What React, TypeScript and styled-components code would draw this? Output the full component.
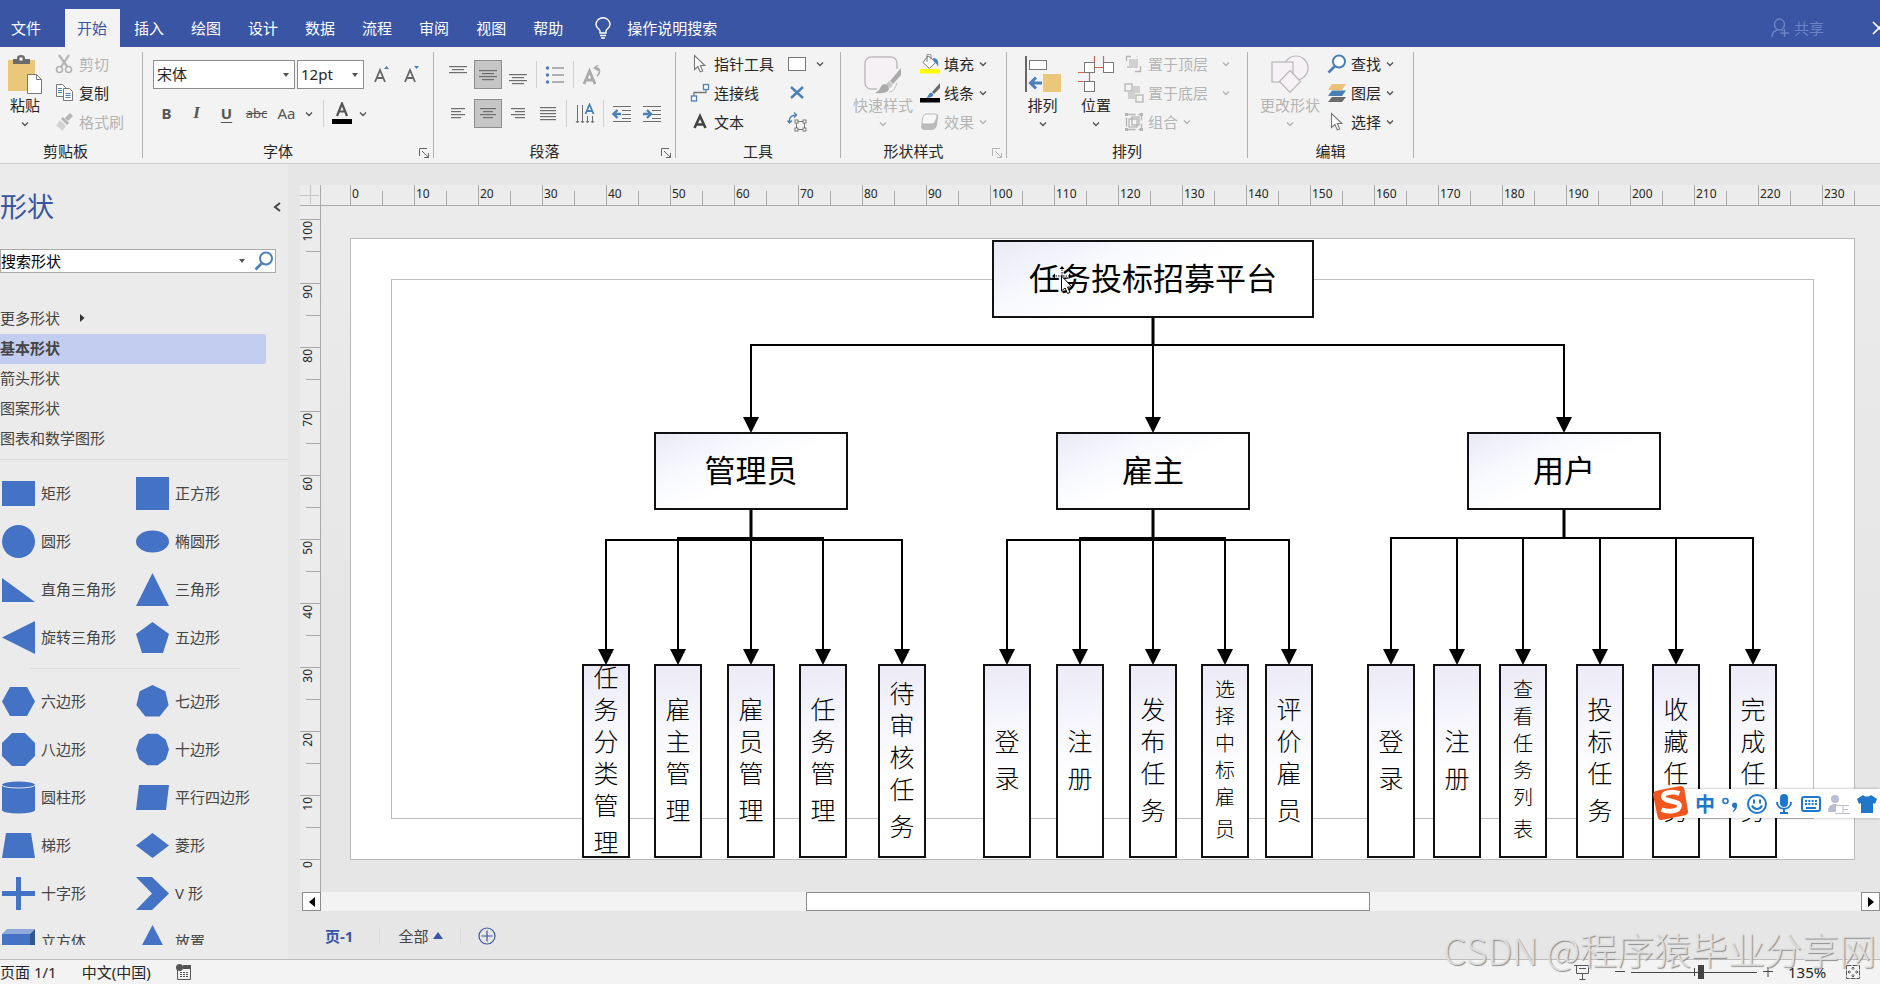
import React from 'react';
import styled, { createGlobalStyle, css } from 'styled-components';

const BLUE = '#3955a3';
const INK = '#262626';
const FADED = '#b4b4b4';
const LINE = '#6e6e6e';
const ACCENT = '#4a7fb8';
const SHAPE = '#4472c4';

const GlobalStyle = createGlobalStyle`
  * { box-sizing: border-box; }
  body { margin: 0; }
  body, button, input, select {
    font-family: "Noto Sans", "Noto Sans CJK SC", sans-serif;
    font-size: 15px;
    line-height: 20px;
    color: ${INK};
  }
  button { background: none; border: 0; padding: 0; margin: 0; }
  svg { display: block; flex: none; }
`;

const Shell = styled.div`
  position: relative;
  display: flex;
  flex-direction: column;
  height: 100vh;
  overflow: hidden;
  background: #e6e6e6;
`;

/* ---------- title bar ---------- */

const TitleBar = styled.header`
  display: flex;
  align-items: flex-end;
  height: 47px;
  flex: none;
  background: ${BLUE};
`;

const Tabs = styled.nav`
  display: flex;
  gap: 2px;
`;

const Tab = styled.button<{ $active?: boolean; $first?: boolean }>`
  height: 38px;
  padding: 0 13px 0 12px;
  white-space: nowrap;
  color: ${p => (p.$active ? BLUE : '#fff')};
  background: ${p => (p.$active ? '#f3f3f3' : 'transparent')};
  ${p => p.$first && css`padding: 0 22px 0 11px;`}
`;

const TellMe = styled.button`
  display: flex;
  align-items: center;
  gap: 16px;
  height: 38px;
  padding-left: 19px;
  color: #fff;
`;

const Share = styled.button`
  display: flex;
  align-items: center;
  gap: 4px;
  height: 38px;
  margin-left: auto;
  color: #6d83c6;
`;

const CloseButton = styled.button`
  width: 56px;
  height: 38px;
  overflow: hidden;
  display: flex;
  align-items: center;
  padding-left: 48px;
`;

/* ---------- ribbon ---------- */

const Ribbon = styled.div`
  display: flex;
  flex: none;
  height: 117px;
  background: #f3f3f3;
  border-bottom: 1px solid #cfcfcf;
`;

const GroupBox = styled.section<{ $width: number }>`
  width: ${p => p.$width}px;
  flex: none;
  padding-top: 2px;
`;

const GroupBody = styled.div<{ $indent: number; $gap?: number }>`
  display: flex;
  gap: ${p => p.$gap ?? 0}px;
  height: 87px;
  padding-left: ${p => p.$indent}px;
`;

const GroupFooter = styled.div<{ $inset?: number }>`
  display: flex;
  align-items: center;
  height: 26px;
  padding: 3px ${p => p.$inset ?? 0}px 0 0;
  span { flex: 1; text-align: center; }
`;

const Launcher = styled.button`
  display: flex;
  justify-content: center;
  width: 20px;
  padding: 4px 0 0 1px;
`;

const GroupDivider = styled.div`
  width: 1px;
  height: 106px;
  margin: 5px 0;
  flex: none;
  background: #b1b1b1;
`;

const Stack = styled.div`
  display: flex;
  flex-direction: column;
`;

const SmallBtn = styled.button<{ $far?: boolean }>`
  display: flex;
  align-items: center;
  gap: 4px;
  height: 29px;
  white-space: nowrap;
  &:disabled { color: ${FADED}; }
  svg:last-child { margin-left: ${p => (p.$far ? 9 : 0)}px; }
`;

const BigBtn = styled.button<{ $width: number }>`
  display: flex;
  flex-direction: column;
  align-items: center;
  width: ${p => p.$width}px;
  height: 87px;
  padding-top: 6px;
  white-space: nowrap;
  &:disabled { color: ${FADED}; }
`;

const BigIcon = styled.span`
  height: 40px;
`;

const BigChevron = styled.span`
  padding-top: 5px;
`;

const TwoRows = styled.div`
  display: flex;
  flex-direction: column;
  gap: 10px;
  padding-top: 11px;
`;

const ToolRow = styled.div`
  display: flex;
  align-items: center;
  height: 29px;
`;

const ToolBtn = styled.button<{ $pressed?: boolean; $slim?: boolean }>`
  display: flex;
  align-items: center;
  justify-content: center;
  width: ${p => (p.$slim ? 12 : 30)}px;
  height: 29px;
  ${p => p.$pressed && css`
    width: 28px;
    margin: 0 1px;
    background: #c6c6c6;
    border: 1px solid #8d8d8d;
  `}
`;

const Glyph = styled.span<{ $kind?: 'bold' | 'italic' | 'under' | 'strike' | 'case' }>`
  color: #555;
  font-weight: 700;
  padding: 0 3px 2px 0;
  ${p => p.$kind === 'italic' && css`font-family: "Liberation Serif", serif; font-style: italic; font-size: 17px;`}
  ${p => p.$kind === 'under' && css`text-decoration: underline; text-underline-offset: 3px;`}
  ${p => p.$kind === 'strike' && css`font-weight: 400; font-size: 13px; text-decoration: line-through;`}
  ${p => p.$kind === 'case' && css`font-weight: 400;`}
`;

const ToolSep = styled.div<{ $wide?: boolean }>`
  width: 1px;
  height: 27px;
  margin: ${p => (p.$wide ? '0 3px 0 8px' : '0 3px')};
  background: #d0d0d0;
`;

const SelectBox = styled.label<{ $width: number }>`
  position: relative;
  width: ${p => p.$width}px;
  height: 29px;
  margin-right: 2px;
  select {
    appearance: none;
    width: 100%;
    height: 100%;
    padding: 0 16px 2px 3px;
    background: #fff;
    border: 1px solid #8d8d8d;
    border-radius: 0;
  }
  svg { position: absolute; right: 5px; top: 13px; pointer-events: none; }
`;

/* ---------- shapes panel ---------- */

const Main = styled.main`
  display: flex;
  flex: 1;
  min-height: 0;
`;

const Panel = styled.aside`
  display: flex;
  flex-direction: column;
  width: 288px;
  flex: none;
  padding-bottom: 14px;
  background: #ebebeb;
`;

const PanelHead = styled.div`
  display: flex;
  justify-content: space-between;
  align-items: center;
  height: 85px;
  padding-right: 7px;
  flex: none;
  h2 { margin: 0; font-size: 27px; line-height: 36px; font-weight: 400; color: ${BLUE}; }
`;

const SearchBox = styled.form`
  display: flex;
  align-items: center;
  width: 276px;
  height: 24px;
  flex: none;
  background: #fff;
  border: 1px solid #a9a9a9;
  input { flex: 1; min-width: 0; height: 20px; padding: 0; border: 0; background: none; color: #000; }
  button { padding: 0 1px 0 8px; }
`;

const StencilList = styled.nav`
  padding: 31px 22px 5px 0;
  flex: none;
`;

const StencilItem = styled.a<{ $active?: boolean }>`
  display: flex;
  align-items: center;
  gap: 20px;
  height: 30px;
  padding-bottom: 2px;
  color: #444;
  text-decoration: none;
  font-weight: ${p => (p.$active ? 700 : 400)};
  background: ${p => (p.$active ? '#c2cdef' : 'transparent')};
  border-radius: 0 2px 2px 0;
`;

const Stencils = styled.div`
  flex: 1;
  min-height: 0;
  overflow: hidden;
  padding-top: 9px;
  border-top: 1px solid #dadada;
`;

const ShapeGrid = styled.div`
  display: grid;
  grid-template-columns: 134px 134px;
  grid-auto-rows: 48px;
`;

const ShapeBtn = styled.button`
  display: flex;
  align-items: center;
  gap: 6px;
  padding-left: 2px;
  color: #444;
  white-space: nowrap;
`;

const StencilRule = styled.div`
  height: 1px;
  margin: 7px 48px 8px 30px;
  background: #dcdcdc;
`;

/* ---------- workspace ---------- */

const Workspace = styled.div`
  display: flex;
  flex-direction: column;
  flex: 1;
  min-width: 0;
  padding: 21px 0 0 12px;
`;

const RulerRow = styled.div`
  display: flex;
  height: 21px;
  flex: none;
  background: #ececec;
  border-bottom: 1px solid #a9a9a9;
`;

const Corner = styled.div`
  width: 21px;
  flex: none;
  border-right: 1px solid #a9a9a9;
`;

const HRuler = styled.div`
  display: flex;
  flex: 1;
  min-width: 0;
  overflow: hidden;
  padding-left: 29px;
`;

const HMark = styled.div`
  position: relative;
  width: 64px;
  flex: none;
  padding-left: 1px;
  border-left: 1px solid #a9a9a9;
  font-size: 12px;
  line-height: 17px;
  &::after {
    content: '';
    position: absolute;
    left: 31px;
    bottom: 0;
    width: 1px;
    height: 14px;
    background: #a9a9a9;
  }
`;

const CanvasRow = styled.div`
  display: flex;
  flex: 1;
  min-height: 0;
`;

const VRuler = styled.div`
  width: 21px;
  flex: none;
  overflow: hidden;
  padding-top: 13px;
  background: #ececec;
  border-right: 1px solid #a9a9a9;
`;

const VMark = styled.div`
  position: relative;
  height: 64px;
  border-top: 1px solid #a9a9a9;
  font-size: 12px;
  line-height: 16px;
  &::after {
    content: '';
    position: absolute;
    right: 0;
    top: 31px;
    width: 14px;
    height: 1px;
    background: #a9a9a9;
  }
  &:last-child::after { display: none; }
  span {
    display: block;
    margin-top: 1px;
    writing-mode: vertical-rl;
    transform: rotate(180deg);
    width: 16px;
  }
`;

const Canvas = styled.div`
  flex: 1;
  min-width: 0;
  overflow: hidden;
  padding: 32px 0 0 29px;
  background: linear-gradient(#ebebeb, #e6e6e6 60%);
`;

const Sheet = styled.div`
  position: relative;
  width: 1505px;
  height: 622px;
  background: #fff;
  outline: 1px solid #b9b9b9;
  outline-offset: -1px;
`;

const Margins = styled.div`
  position: absolute;
  inset: 41px;
  border: 1px solid #bdbdbd;
`;

const Wires = styled.svg`
  position: absolute;
  inset: 0;
`;

const Node = styled.div<{ $leaf?: boolean }>`
  position: absolute;
  display: flex;
  flex-direction: column;
  align-items: center;
  justify-content: center;
  padding-bottom: ${p => (p.$leaf ? 6 : 5)}px;
  border: 2px solid #111;
  color: #000;
  font-family: "Noto Sans CJK SC", sans-serif;
  font-size: 31px;
  line-height: 40px;
  white-space: nowrap;
  background: ${p => (p.$leaf
    ? 'linear-gradient(172deg, #ebeaf6, #f6f6fc 30%, #fff 60%)'
    : 'linear-gradient(155deg, #e9e9f5, #f8f9fd 30%, #fff 55%)')};
`;

const Column = styled.span<{ $small?: boolean }>`
  white-space: normal;
  word-break: break-all;
  font-weight: 300;
  width: ${p => (p.$small ? 20 : 25)}px;
  font-size: ${p => (p.$small ? 20 : 25)}px;
  line-height: ${p => (p.$small ? 27 : 32)}px;
  span { display: block; padding-top: 5px; }
`;

const Pointer = styled.svg`
  position: absolute;
  left: 702px;
  top: 28px;
`;

const ScrollRow = styled.div`
  display: flex;
  height: 20px;
  flex: none;
  padding-left: 2px;
`;

const ScrollBtn = styled.button`
  display: flex;
  align-items: center;
  justify-content: center;
  width: 19px;
  height: 19px;
  background: #fff;
  border: 1px solid #8d8d8d;
`;

const ScrollTrack = styled.div`
  display: grid;
  grid-template-columns: 485fr 564fr 491fr;
  flex: 1;
  height: 19px;
  background: #f3f3f3;
`;

const ScrollThumb = styled.div`
  grid-column: 2;
  background: #fff;
  border: 1px solid #8d8d8d;
`;

const PageTabs = styled.div`
  display: flex;
  align-items: center;
  height: 47px;
  flex: none;
  padding-left: 25px;
`;

const PageTab = styled.button<{ $active?: boolean }>`
  display: flex;
  align-items: center;
  gap: 5px;
  color: ${p => (p.$active ? BLUE : '#444')};
  font-weight: ${p => (p.$active ? 700 : 400)};
`;

const PageSep = styled.div`
  width: 1px;
  height: 17px;
  margin: 0 18px 0 26px;
  background: #dcdcdc;
  & ~ & { margin: 0 17px; }
`;

/* ---------- status bar ---------- */

const StatusBar = styled.footer`
  display: flex;
  align-items: center;
  height: 25px;
  flex: none;
  padding-right: 20px;
  background: #f3f3f3;
  border-top: 1px solid #bcbcbc;
`;

const StatusLeft = styled.div`
  display: flex;
  align-items: center;
  gap: 25px;
  flex: 1;
`;

const ZoomGroup = styled.div`
  display: flex;
  align-items: center;
  gap: 6px;
  margin: 0 8px 0 24px;
`;

const ZoomSlider = styled.input`
  appearance: none;
  width: 126px;
  height: 16px;
  margin: 0;
  background: linear-gradient(#444, #444) center / 100% 1px no-repeat,
    linear-gradient(#444, #444) center / 1px 8px no-repeat;
  &::-webkit-slider-thumb {
    appearance: none;
    width: 6px;
    height: 14px;
    background: #444;
  }
`;

const ZoomText = styled.button`
  width: 65px;
  padding-left: 7px;
  text-align: left;
`;

/* ---------- floating pieces ---------- */

const ImeBar = styled.div`
  position: absolute;
  right: 0;
  bottom: 166px;
  display: flex;
  align-items: center;
  gap: 5px;
  height: 29px;
  padding: 0 2px 0 40px;
  background: #fff;
  box-shadow: 0 0 3px rgba(0, 0, 0, 0.35);
  border-radius: 14px 0 0 14px;
`;

const ImeLogo = styled.svg`
  position: absolute;
  left: -1px;
  top: -4px;
`;

const ImeMode = styled.button`
  width: 22px;
  color: #1f77c9;
  font-family: "Noto Sans CJK SC", sans-serif;
  font-weight: 700;
  font-size: 20px;
`;

const Watermark = styled.div`
  position: absolute;
  right: 4px;
  bottom: 12px;
  font-family: "Noto Sans CJK SC", sans-serif;
  font-weight: 300;
  font-size: 37px;
  line-height: 46px;
  color: rgba(228, 228, 228, 0.9);
  text-shadow: 1px 1px 1px #8c8c8c;
  pointer-events: none;
  white-space: nowrap;
`;

/* ---------- small drawings ---------- */

const Chevron = ({ faded }: { faded?: boolean }) => (
  <svg width="10" height="8" viewBox="0 0 10 8" fill="none" stroke={faded ? FADED : '#555'} strokeWidth="1.4">
    <path d="M2 2.5 5 5.5 8 2.5" />
  </svg>
);

const Caret = () => (
  <svg width="8" height="5" viewBox="0 0 8 5"><path d="M1 0h6L4 4z" fill="#555" /></svg>
);

const Lines = ({ rows }: { rows: [number, number, number][] }) => (
  <svg width="20" height="20" viewBox="0 0 20 20" fill={LINE}>
    {rows.map(([x, y, len]) => <rect key={y} x={x} y={y} width={len} height="1.2" />)}
  </svg>
);

const Arrow = () => (
  <svg width="20" height="20" viewBox="0 0 20 20" fill="#fff" stroke="#777" strokeWidth="1.1">
    <path d="M4.5 1.5v14l3.4-3 2.4 5.4 2.4-1-2.4-5.4h4.6z" />
  </svg>
);

const Magnifier = () => (
  <svg width="20" height="20" viewBox="0 0 20 20" fill="none" stroke={ACCENT} strokeWidth="2">
    <circle cx="12" cy="7.5" r="6" fill="#fff" /><path d="M8 12 1.5 18.5" strokeWidth="2.6" />
  </svg>
);

const PasteIcon = () => (
  <svg width="34" height="40" viewBox="0 0 34 40">
    <path d="M0 5h27v31H0z" fill="#ebc77c" />
    <path d="M5 4h4V3a4 3 0 0 1 8 0v1h5v5H5z" fill="#6b6b6b" /><rect x="11.5" y="2.5" width="3" height="3" fill="#fff" />
    <path d="M19.5 19.5h9l5 5V38.5h-14z" fill="#fff" stroke="#777" /><path d="M28.5 19.5v5h5" fill="none" stroke="#777" />
  </svg>
);

const CutIcon = () => (
  <svg width="20" height="20" viewBox="0 0 20 20" fill="none" stroke={FADED} strokeWidth="1.6">
    <path d="M4 1l8.5 12M14 1 6 13" strokeWidth="2.2" /><circle cx="4.5" cy="15.5" r="3" /><circle cx="13.5" cy="15.5" r="3" />
  </svg>
);

const CopyIcon = () => (
  <svg width="20" height="20" viewBox="0 0 20 20" fill="#fff" stroke="#777">
    <path d="M1.5 1.5h6l3 3v9h-9z" /><path d="M8.5 5.5h6l3 3v9h-9z" />
    <path d="M10.5 10.5h5M10.5 12.5h5M10.5 14.5h5M3 5.5h4M3 7.5h4M3 9.5h4" stroke={ACCENT} />
  </svg>
);

const BrushIcon = () => (
  <svg width="20" height="20" viewBox="0 0 20 20" fill={FADED}>
    <path d="M15 1l3 3-5 5-3-3z" /><path d="M8 5l6 6-2 2-6-6z" /><path d="M5 8l6 6-4 5c-1-2-3-4-6-5z" fill="#d2d2d2" />
  </svg>
);

const GrowFont = ({ down }: { down?: boolean }) => (
  <svg width="20" height="20" viewBox="0 0 20 20" fill="none" stroke="#666" strokeWidth="1.8">
    <path d="M4 17 9 5l5 12M5.5 13h7" />
    <path d={down ? 'M13 1h5l-2.5 3z' : 'M13 4h5L15.5 1z'} fill={ACCENT} stroke="none" />
  </svg>
);

const FontColor = () => (
  <svg width="20" height="24" viewBox="0 0 20 24">
    <path d="M5 14 10 1.5 15 14M6.5 9.5h7" fill="none" stroke="#555" strokeWidth="2.2" /><rect y="17" width="20" height="5" />
  </svg>
);

const Bullets = () => (
  <svg width="20" height="20" viewBox="0 0 20 20">
    <path d="M7 3h12M7 10h12M7 17h12" stroke={LINE} />
    <g fill={ACCENT}><circle cx="2.5" cy="3" r="1.7" /><circle cx="2.5" cy="10" r="1.7" /><circle cx="2.5" cy="17" r="1.7" /></g>
  </svg>
);

const RotateText = () => (
  <svg width="20" height="20" viewBox="0 0 20 20" fill="none" stroke="#aaa">
    <path d="M2 19 7.5 6 13 19M4 15h7" strokeWidth="2.8" /><path d="M13 3c5-1 6 5 2 8M16 0l-3.5 3 4 2.5" strokeWidth="1.6" />
  </svg>
);

const TextDir = () => (
  <svg width="20" height="22" viewBox="0 0 20 22" fill="none" stroke={LINE}>
    <path d="M2.5 2v17M7.5 2v17M12.5 13v6M17.5 13v6M1 18l1.5 2L4 18M6 18l1.5 2L9 18M11 18l1.5 2 1.5-2M16 18l1.5 2 1.5-2" />
    <path d="M10.5 11 14.5 1.5 18.5 11M12 8h5" stroke={ACCENT} strokeWidth="1.8" />
  </svg>
);

const Indent = ({ right }: { right?: boolean }) => (
  <svg width="20" height="20" viewBox="0 0 20 20" fill="none" stroke={LINE}>
    <path d="M1 2.5h18M10 6.5h9M10 10.5h9M10 14.5h9M1 17.5h18" />
    <path d={right ? 'M1 10h7M5 6l4 4-4 4' : 'M9 10H2M5.5 6l-4 4 4 4'} stroke={ACCENT} strokeWidth="2.4" />
  </svg>
);

const ConnectorIcon = () => (
  <svg width="20" height="20" viewBox="0 0 20 20" fill="#fff" stroke={ACCENT} strokeWidth="1.3">
    <path d="M4 14V9.5h12V6" fill="none" stroke="#777" /><rect x="1.5" y="13" width="5" height="5" /><rect x="13.5" y="1.5" width="5" height="5" />
  </svg>
);

const LetterA = () => (
  <svg width="20" height="20" viewBox="0 0 20 20" fill="none" stroke="#444" strokeWidth="2.6">
    <path d="M4.5 16 10 4l5.5 12M6.5 12.5h7" />
  </svg>
);

const BoxIcon = () => (
  <svg width="20" height="20" viewBox="0 0 20 20"><rect x="1.5" y="3.5" width="17" height="13" fill="#fff" stroke="#777" /></svg>
);

const CrossIcon = () => (
  <svg width="20" height="20" viewBox="0 0 20 20" stroke={ACCENT} strokeWidth="2.4"><path d="M4 4l12 11M16 4 4 15" /></svg>
);

const AnchorIcon = () => (
  <svg width="20" height="20" viewBox="0 0 20 20" fill="none" stroke="#777">
    <rect x="9.5" y="9.5" width="8" height="8" />
    <g fill="#fff"><rect x="8" y="8" width="3" height="3" /><rect x="16" y="8" width="3" height="3" /><rect x="8" y="16" width="3" height="3" /><rect x="16" y="16" width="3" height="3" /></g>
    <path d="M2.5 11V8c0-3 3-5 7-5M7 0.5 9.5 3 7 5.5M0.5 8.5l2 2.5 2.5-2.5" stroke={ACCENT} strokeWidth="1.4" />
  </svg>
);

const QuickStyleIcon = () => (
  <svg width="38" height="40" viewBox="0 0 38 40" fill="none" stroke="#c0bcc0">
    <path d="M13 34H7a6 6 0 0 1-6-6V8a6 6 0 0 1 6-6h20a6 6 0 0 1 6 6v6" fill="#f5f1f5" strokeWidth="1.5" />
    <path d="M37 13v7l-8 9-3-3z" fill="#aaa" stroke="none" /><path d="M25 26l4 4-3 3-4-4z" fill="#c6c6c6" stroke="none" />
    <path d="M11 38c4-2 5-5 7-8 3-2 7 0 7 4-1 4-8 5-14 4z" fill="#aaa" stroke="none" /><path d="M25 37c5 0 6-4 8-9" />
  </svg>
);

const FillIcon = () => (
  <svg width="20" height="20" viewBox="0 0 20 20">
    <path d="M8 2 3 8.5l6.5 6L16 8z" fill="#fff" stroke="#777" /><path d="M7 8V1.5a2 1.5 0 0 1 4 0V5" fill="none" stroke="#777" />
    <path d="M13 4c5 0 6 4 5 9-1-3-2-4-4-5z" fill={ACCENT} /><path d="M0 15h20v4.5H0z" fill="#ff0" />
  </svg>
);

const LineIcon = () => (
  <svg width="20" height="20" viewBox="0 0 20 20">
    <path d="M20 0v5l-6 6-2-2z" fill="#6b6b6b" /><path d="M6 15c3-1 2-6 6-5 3 2 0 5-6 5z" fill={ACCENT} /><path d="M0 15h20v4.5H0z" />
  </svg>
);

const EffectIcon = () => (
  <svg width="20" height="20" viewBox="0 0 20 20">
    <path d="M5 2h11q3 0 2 4l-1 7q-1 5-6 5H5q-4 0-4-4z" fill="#bbb" /><path d="M6 2h9q3 0 2 3l-2 5q-1 2-4 2H4q-3 0-2-3l1-4q1-3 3-3z" fill="#f7f7f7" stroke="#bbb" />
  </svg>
);

const AlignIcon = () => (
  <svg width="36" height="40" viewBox="0 0 36 40">
    <path d="M1 1v36" stroke="#666" strokeWidth="2" /><rect x="4.5" y="5.5" width="17" height="9" fill="#fff" stroke="#777" />
    <rect x="18" y="19" width="18" height="18" fill="#ebc77c" /><path d="M17 28H6M11 22.5 5.5 28l5.5 5.5" fill="none" stroke={ACCENT} strokeWidth="3" />
  </svg>
);

const PositionIcon = () => (
  <svg width="36" height="40" viewBox="0 0 36 40" fill="#fff">
    <path d="M16.5 1v7M25.5 1v7M16 12.5h9M0 17.5h6M0 26.5h6M11.5 17v9" stroke="#d0674c" strokeWidth="1.2" />
    <g stroke="#777"><rect x="6.5" y="7.5" width="10" height="10" /><rect x="25.5" y="7.5" width="10" height="10" /><rect x="6.5" y="26.5" width="10" height="10" /></g>
  </svg>
);

const FrontIcon = () => (
  <svg width="20" height="20" viewBox="0 0 20 20" fill="none" stroke={FADED} strokeWidth="1.3">
    <rect x="5" y="5" width="9" height="9" fill="#d0d0d0" stroke="none" /><path d="M2.5 7V2.500H7M13 2.500V3M11 17.500h5.500V12M4 12v2" />
  </svg>
);

const BackIcon = () => (
  <svg width="20" height="20" viewBox="0 0 20 20" fill="#f3f3f3" stroke={FADED} strokeWidth="1.3">
    <rect x="9" y="3" width="7" height="7" fill="#d0d0d0" stroke="none" /><rect x="4" y="9" width="7" height="7" fill="#d0d0d0" stroke="none" />
    <rect x="1" y="1" width="7" height="7" /><rect x="12" y="12" width="7" height="7" />
  </svg>
);

const GroupIcon = () => (
  <svg width="20" height="20" viewBox="0 0 20 20" fill="none" stroke={FADED} strokeWidth="1.3">
    <rect x="2.5" y="2.5" width="15" height="15" strokeDasharray="9 3" /><rect x="5" y="7" width="8" height="8" /><rect x="8" y="5" width="7" height="8" />
    <g fill={FADED} stroke="none"><rect x="1" y="1" width="3" height="3" /><rect x="16" y="1" width="3" height="3" /><rect x="1" y="16" width="3" height="3" /><rect x="16" y="16" width="3" height="3" /></g>
  </svg>
);

const ChangeShapeIcon = () => (
  <svg width="38" height="40" viewBox="0 0 38 40" fill="#f5f1f5" stroke="#bbb6bb" strokeWidth="1.2">
    <circle cx="25" cy="13" r="12" /><rect x="1" y="7" width="21" height="20" /><path d="M19 15.5 29.5 26.5 19 37.5 8.5 26.5z" />
  </svg>
);

const LayersIcon = () => (
  <svg width="20" height="20" viewBox="0 0 20 20">
    <path d="M5 1h14l-4 6H1z" fill="#ebc077" /><path d="M5 7.5h14l-4 5.5H1z" fill={ACCENT} /><path d="M5 14h14l-4 5H1z" fill="#6b6b6b" />
  </svg>
);

const DialogMark = ({ faded }: { faded?: boolean }) => (
  <svg width="10" height="10" viewBox="0 0 10 10" fill="none" stroke={faded ? FADED : '#666'}>
    <path d="M.5 8V.5H8M3 3l6 6M9.5 5v4.5H5" />
  </svg>
);

/* ---------- stencil shapes ---------- */

const polygon = (n: number, start = -90) =>
  Array.from({ length: n }, (_, i) => {
    const a = ((start + (360 / n) * i) * Math.PI) / 180;
    return `${(16.5 + 16.5 * Math.cos(a)).toFixed(1)},${(16.5 + 16.5 * Math.sin(a)).toFixed(1)}`;
  }).join(' ');

const poly = (points: string) => <polygon points={points} />;

const basicShapes: [string, React.ReactNode][] = [
  ['矩形', <rect x="0" y="4" width="33" height="25" />],
  ['正方形', <rect x="0" y="0" width="33" height="33" />],
  ['圆形', <circle cx="16.5" cy="16.5" r="16.5" />],
  ['椭圆形', <ellipse cx="16.5" cy="16.5" rx="16.5" ry="11" />],
  ['直角三角形', poly('0,5 0,29 33,29')],
  ['三角形', poly('16.5,0 33,33 0,33')],
  ['旋转三角形', poly('33,0 33,33 0,16.5')],
  ['五边形', poly('16.5,1 33,13 27,32 6,32 0,13')],
];

const moreShapes: [string, React.ReactNode][] = [
  ['六边形', poly('8,2 25,2 33,16.5 25,31 8,31 0,16.5')],
  ['七边形', poly(polygon(7))],
  ['八边形', poly('10,0 23,0 33,10 33,23 23,33 10,33 0,23 0,10')],
  ['十边形', poly(polygon(10, -72))],
  ['圆柱形', <><path d="M0 4a16.5 3.5 0 0 1 33 0v25a16.5 3.5 0 0 1-33 0z" /><path d="M0 4a16.5 3 0 0 0 33 0" fill="none" stroke="#dfe6f5" /></>],
  ['平行四边形', poly('3,4 33,4 30,29 0,29')],
  ['梯形', poly('4,4 29,4 33,29 0,29')],
  ['菱形', poly('16.5,4 33,16.5 16.5,29 0,16.5')],
  ['十字形', poly('14,0 19,0 19,14 33,14 33,19 19,19 19,33 14,33 14,19 0,19 0,14 14,14')],
  ['V 形', poly('0,0 16,0 33,16.5 16,33 0,33 16,16.5')],
  ['立方体', <><path d="M0 9h28v24H0z" /><path d="M0 9 5 4h28l-5 5z" fill="#8fa9da" /><path d="M28 9l5-5v29h-5z" fill="#34568f" /></>],
  ['放置', poly('16.5,0 28,22 28,33 5,33 5,22')],
];

const ShapeList = ({ items }: { items: [string, React.ReactNode][] }) => (
  <ShapeGrid>
    {items.map(([name, drawing]) => (
      <ShapeBtn key={name} type="button">
        <svg width="33" height="33" viewBox="0 0 33 33" fill={SHAPE}>{drawing}</svg>
        {name}
      </ShapeBtn>
    ))}
  </ShapeGrid>
);

/* ---------- diagram data, in sheet coordinates ---------- */

type Leaf = { x: number; text: string; small?: boolean; bus?: number };
type Branch = { x: number; text: string; leaves: Leaf[] };

const branches: Branch[] = [
  { x: 304, text: '管理员', leaves: [
    { x: 232, text: '任务分类管理', bus: 302 },
    { x: 304, text: '雇主管理' },
    { x: 377, text: '雇员管理' },
    { x: 449, text: '任务管理' },
    { x: 528, text: '待审核任务', bus: 302 },
  ] },
  { x: 706, text: '雇主', leaves: [
    { x: 633, text: '登录', bus: 302 },
    { x: 706, text: '注册' },
    { x: 779, text: '发布任务' },
    { x: 851, text: '选择中标雇员', small: true },
    { x: 915, text: '评价雇员', bus: 302 },
  ] },
  { x: 1117, text: '用户', leaves: [
    { x: 1017, text: '登录' },
    { x: 1083, text: '注册' },
    { x: 1149, text: '查看任务列表', small: true },
    { x: 1226, text: '投标任务' },
    { x: 1302, text: '收藏任务' },
    { x: 1379, text: '完成任务' },
  ] },
];

const ROOT_X = 803;
const BRANCH_W = 194;
const LEAF_W = 48;

const Diagram = () => (
  <>
    <Wires width="1505" height="622" viewBox="0 0 1505 622" fill="none" stroke="#000" strokeWidth="2">
      {branches.map(b => {
        const bx = b.x + BRANCH_W / 2;
        return (
          <g key={b.text}>
            <path d={`M${ROOT_X} 80V107H${bx}V182`} />
            <path d={`M${bx - 8} 179h16l-8 16z`} fill="#000" stroke="none" />
            <path d={`M${bx} 271V300`} strokeWidth="3" />
            {b.leaves.map(l => {
              const lx = l.x + LEAF_W / 2;
              return (
                <g key={l.text}>
                  <path d={`M${bx} 280V${l.bus ?? 300}H${lx}V414`} />
                  <path d={`M${lx - 8} 411h16l-8 16z`} fill="#000" stroke="none" />
                </g>
              );
            })}
          </g>
        );
      })}
      <path d={`M${ROOT_X} 79V107`} strokeWidth="3" />
    </Wires>
    <Node style={{ left: 642, top: 2, width: 322, height: 78 }}>任务投标招募平台</Node>
    {branches.map(b => (
      <React.Fragment key={b.text}>
        <Node style={{ left: b.x, top: 194, width: BRANCH_W, height: 78 }}>{b.text}</Node>
        {b.leaves.map(l => (
          <Node key={l.text} $leaf style={{ left: l.x, top: 426, width: LEAF_W, height: 194 }}>
            <Column $small={l.small}>
              {l.text.slice(0, -1)}<span>{l.text.slice(-1)}</span>
            </Column>
          </Node>
        ))}
      </React.Fragment>
    ))}
    <Pointer width="20" height="30" viewBox="0 0 20 30">
      <g fill="none" stroke="#fff" strokeWidth="3"><path d="M10 2v16M2 10h16" /></g>
      <path d="M10 1v18M1 10h18" stroke="#000" strokeDasharray="1.5 1" />
      <path d="M10 0 7.5 3h5zM0 10l3-2.5v5zM20 10l-3-2.5v5z" />
      <path d="M9.5 10v15l3.5-3 2.5 5.5 2.500-1-2.500-5.500h4.500z" fill="#fff" stroke="#000" />
    </Pointer>
  </>
);

/* ---------- ribbon composition ---------- */

type GroupProps = {
  width: number; indent: number; gap?: number; label: string; inset?: number;
  launcher?: boolean; fadedLauncher?: boolean; children: React.ReactNode;
};

const Group = ({ width, indent, gap, label, inset, launcher, fadedLauncher, children }: GroupProps) => (
  <>
    <GroupBox $width={width} aria-label={label}>
      <GroupBody $indent={indent} $gap={gap}>{children}</GroupBody>
      <GroupFooter $inset={inset}>
        <span>{label}</span>
        {launcher && <Launcher type="button" aria-label={`${label}设置`}><DialogMark faded={fadedLauncher} /></Launcher>}
      </GroupFooter>
    </GroupBox>
    <GroupDivider />
  </>
);

type BtnProps = { icon: React.ReactNode; label: string; disabled?: boolean; menu?: boolean; far?: boolean };

const Small = ({ icon, label, disabled, menu, far }: BtnProps) => (
  <SmallBtn type="button" disabled={disabled} $far={far}>
    {icon}<span>{label}</span>{menu && <Chevron faded={disabled} />}
  </SmallBtn>
);

const Big = ({ icon, label, disabled, width }: BtnProps & { width: number }) => (
  <BigBtn type="button" disabled={disabled} $width={width}>
    <BigIcon>{icon}</BigIcon>
    <span>{label}</span>
    <BigChevron><Chevron faded={disabled} /></BigChevron>
  </BigBtn>
);

const tabs = ['插入', '绘图', '设计', '数据', '流程', '审阅', '视图', '帮助'];
const hMarks = Array.from({ length: 24 }, (_, i) => i * 10);
const vMarks = Array.from({ length: 11 }, (_, i) => 100 - i * 10);

export default function App() {
  return (
    <Shell>
      <GlobalStyle />
      <TitleBar>
        <Tabs>
          <Tab type="button" $first>文件</Tab>
          <Tab type="button" $active>开始</Tab>
          {tabs.map(t => <Tab type="button" key={t}>{t}</Tab>)}
        </Tabs>
        <TellMe type="button">
          <svg width="16" height="22" viewBox="0 0 16 22" fill="none" stroke="#fff" strokeWidth="1.4">
            <path d="M5 16v-2C5 12 1 11 1 7.5a7 6.8 0 0 1 14 0C15 11 11 12 11 14v2zM5 18.5h6M6 21h4" />
          </svg>
          操作说明搜索
        </TellMe>
        <Share type="button">
          <svg width="19" height="20" viewBox="0 0 19 20" fill="none" stroke="#6d83c6" strokeWidth="1.4">
            <ellipse cx="8.5" cy="6.5" rx="5" ry="5.5" /><path d="M1 19c0-4 2-6 5-7M11 12l1 1M13.5 11v8M9.5 15h8.5" />
          </svg>
          共享
        </Share>
        <CloseButton type="button" aria-label="关闭">
          <svg width="14" height="14" viewBox="0 0 14 14" stroke="#fff" strokeWidth="1.6"><path d="M1 1l12 12M13 1 1 13" /></svg>
        </CloseButton>
      </TitleBar>

      <Ribbon>
        <Group width={142} indent={6} gap={11} label="剪贴板" inset={11}>
          <Big icon={<PasteIcon />} label="粘贴" width={38} />
          <Stack>
            <Small icon={<CutIcon />} label="剪切" disabled />
            <Small icon={<CopyIcon />} label="复制" />
            <Small icon={<BrushIcon />} label="格式刷" disabled />
          </Stack>
        </Group>

        <Group width={290} indent={10} label="字体" launcher>
          <TwoRows>
            <ToolRow>
              <SelectBox $width={142}>
                <select aria-label="字体" defaultValue="宋体"><option>宋体</option></select><Caret />
              </SelectBox>
              <SelectBox $width={67}>
                <select aria-label="字号" defaultValue="12pt"><option>12pt</option></select><Caret />
              </SelectBox>
              <ToolBtn type="button" aria-label="增大字号"><GrowFont /></ToolBtn>
              <ToolBtn type="button" aria-label="减小字号"><GrowFont down /></ToolBtn>
            </ToolRow>
            <ToolRow>
              <ToolBtn type="button"><Glyph $kind="bold">B</Glyph></ToolBtn>
              <ToolBtn type="button"><Glyph $kind="italic">I</Glyph></ToolBtn>
              <ToolBtn type="button"><Glyph $kind="under">U</Glyph></ToolBtn>
              <ToolBtn type="button"><Glyph $kind="strike">abc</Glyph></ToolBtn>
              <ToolBtn type="button"><Glyph $kind="case">Aa</Glyph></ToolBtn>
              <ToolBtn type="button" $slim aria-label="更改大小写"><Chevron /></ToolBtn>
              <ToolSep $wide />
              <ToolBtn type="button" aria-label="字体颜色"><FontColor /></ToolBtn>
              <ToolBtn type="button" $slim aria-label="更多颜色"><Chevron /></ToolBtn>
            </ToolRow>
          </TwoRows>
        </Group>

        <Group width={241} indent={9} label="段落" launcher>
          <TwoRows>
            <ToolRow>
              <ToolBtn type="button" aria-label="顶端对齐"><Lines rows={[[1, 1, 18], [4, 4, 12], [1, 7, 18]]} /></ToolBtn>
              <ToolBtn type="button" $pressed aria-label="中部对齐"><Lines rows={[[1, 5, 18], [4, 8, 12], [1, 11, 18], [4, 14, 12]]} /></ToolBtn>
              <ToolBtn type="button" aria-label="底端对齐"><Lines rows={[[1, 9, 18], [4, 12, 12], [1, 15, 18], [4, 18, 12]]} /></ToolBtn>
              <ToolSep />
              <ToolBtn type="button" aria-label="项目符号"><Bullets /></ToolBtn>
              <ToolSep />
              <ToolBtn type="button" disabled aria-label="旋转文本"><RotateText /></ToolBtn>
            </ToolRow>
            <ToolRow>
              <ToolBtn type="button" aria-label="左对齐"><Lines rows={[[3, 4, 14], [3, 7, 10], [3, 10, 14], [3, 13, 10]]} /></ToolBtn>
              <ToolBtn type="button" $pressed aria-label="居中"><Lines rows={[[2, 4, 16], [5, 7, 10], [2, 10, 16], [5, 13, 10]]} /></ToolBtn>
              <ToolBtn type="button" aria-label="右对齐"><Lines rows={[[3, 4, 14], [7, 7, 10], [3, 10, 14], [7, 13, 10]]} /></ToolBtn>
              <ToolBtn type="button" aria-label="两端对齐"><Lines rows={[[2, 3, 16], [2, 6, 16], [2, 9, 16], [2, 12, 16], [2, 15, 16]]} /></ToolBtn>
              <ToolSep />
              <ToolBtn type="button" aria-label="文字方向"><TextDir /></ToolBtn>
              <ToolSep />
              <ToolBtn type="button" aria-label="减少缩进"><Indent /></ToolBtn>
              <ToolBtn type="button" aria-label="增加缩进"><Indent right /></ToolBtn>
            </ToolRow>
          </TwoRows>
        </Group>

        <Group width={164} indent={14} gap={13} label="工具">
          <Stack>
            <Small icon={<Arrow />} label="指针工具" />
            <Small icon={<ConnectorIcon />} label="连接线" />
            <Small icon={<LetterA />} label="文本" />
          </Stack>
          <Stack>
            <SmallBtn type="button" aria-label="矩形"><BoxIcon /><span /><Chevron /></SmallBtn>
            <SmallBtn type="button" aria-label="连接点"><CrossIcon /></SmallBtn>
            <SmallBtn type="button" aria-label="文本块"><AnchorIcon /></SmallBtn>
          </Stack>
        </Group>

        <Group width={165} indent={12} gap={7} label="形状样式" launcher fadedLauncher>
          <Big icon={<QuickStyleIcon />} label="快速样式" width={60} disabled />
          <Stack>
            <Small icon={<FillIcon />} label="填充" menu />
            <Small icon={<LineIcon />} label="线条" menu />
            <Small icon={<EffectIcon />} label="效果" menu disabled />
          </Stack>
        </Group>

        <Group width={240} indent={10} gap={2} label="排列">
          <Big icon={<AlignIcon />} label="排列" width={51} />
          <Big icon={<PositionIcon />} label="位置" width={52} />
          <Stack>
            <Small icon={<FrontIcon />} label="置于顶层" menu far disabled />
            <Small icon={<BackIcon />} label="置于底层" menu far disabled />
            <Small icon={<GroupIcon />} label="组合" menu disabled />
          </Stack>
        </Group>

        <Group width={165} indent={12} gap={7} label="编辑">
          <Big icon={<ChangeShapeIcon />} label="更改形状" width={60} disabled />
          <Stack>
            <Small icon={<Magnifier />} label="查找" menu />
            <Small icon={<LayersIcon />} label="图层" menu />
            <Small icon={<Arrow />} label="选择" menu />
          </Stack>
        </Group>
      </Ribbon>

      <Main>
        <Panel>
          <PanelHead>
            <h2>形状</h2>
            <button type="button" aria-label="折叠">
              <svg width="8" height="10" viewBox="0 0 8 10" fill="none" stroke="#444" strokeWidth="2"><path d="M7 1 2 5l5 4" /></svg>
            </button>
          </PanelHead>
          <SearchBox onSubmit={e => e.preventDefault()}>
            <input aria-label="搜索形状" defaultValue="搜索形状" />
            <Caret />
            <button type="submit" aria-label="搜索"><Magnifier /></button>
          </SearchBox>
          <StencilList>
            <StencilItem href="#more">
              更多形状
              <svg width="5" height="8" viewBox="0 0 5 8"><path d="M0 0v8l4.5-4z" fill="#333" /></svg>
            </StencilItem>
            <StencilItem href="#basic" $active>基本形状</StencilItem>
            <StencilItem href="#arrows">箭头形状</StencilItem>
            <StencilItem href="#patterns">图案形状</StencilItem>
            <StencilItem href="#charts">图表和数学图形</StencilItem>
          </StencilList>
          <Stencils>
            <ShapeList items={basicShapes} />
            <StencilRule />
            <ShapeList items={moreShapes} />
          </Stencils>
        </Panel>

        <Workspace>
          <RulerRow>
            <Corner>
              <svg width="20" height="20" viewBox="0 0 20 20" stroke="#c4c4c4"><path d="M10.5 0v19M0 10.5h19" /></svg>
            </Corner>
            <HRuler>{hMarks.map(m => <HMark key={m}>{m}</HMark>)}</HRuler>
          </RulerRow>
          <CanvasRow>
            <VRuler>{vMarks.map(m => <VMark key={m}><span>{m}</span></VMark>)}</VRuler>
            <Canvas>
              <Sheet>
                <Margins />
                <Diagram />
              </Sheet>
            </Canvas>
          </CanvasRow>
          <ScrollRow>
            <ScrollBtn type="button" aria-label="向左滚动">
              <svg width="6" height="10" viewBox="0 0 6 10"><path d="M6 0v10L0 5z" /></svg>
            </ScrollBtn>
            <ScrollTrack><ScrollThumb /></ScrollTrack>
            <ScrollBtn type="button" aria-label="向右滚动">
              <svg width="6" height="10" viewBox="0 0 6 10"><path d="M0 0v10l6-5z" /></svg>
            </ScrollBtn>
          </ScrollRow>
          <PageTabs>
            <PageTab type="button" $active>页-1</PageTab>
            <PageSep />
            <PageTab type="button">
              全部
              <svg width="10" height="7" viewBox="0 0 10 7"><path d="M0 7 5 0l5 7z" fill={BLUE} /></svg>
            </PageTab>
            <PageSep />
            <PageTab type="button" aria-label="插入页">
              <svg width="18" height="18" viewBox="0 0 18 18" fill="none" stroke={BLUE} strokeWidth="1.2"><circle cx="9" cy="9" r="8" /><path d="M9 3.5v11M3.5 9h11" /></svg>
            </PageTab>
          </PageTabs>
        </Workspace>
      </Main>

      <StatusBar>
        <StatusLeft>
          <span>页面 1/1</span>
          <span>中文(中国)</span>
          <svg width="16" height="16" viewBox="0 0 16 16" fill="none" stroke="#555">
            <path d="M1.5 6v9.5h13V3" /><path d="M7 1h8v4H7z" fill="#555" stroke="none" /><circle cx="3.5" cy="3.5" r="3.5" fill="#555" stroke="none" />
            <path d="M4 8.5h9M4 10.5h9M4 12.5h9" strokeDasharray="2 1" />
          </svg>
        </StatusLeft>
        <svg width="17" height="16" viewBox="0 0 17 16" fill="none" stroke="#555"><path d="M0 1.5h17M2.5 2v7.5h12V2M5 4.5h7M8.5 9.5V15M5.5 15.5h6" /></svg>
        <ZoomGroup>
          <button type="button" aria-label="缩小"><svg width="10" height="10" viewBox="0 0 10 10" stroke="#444"><path d="M0 4.5h10" /></svg></button>
          <ZoomSlider type="range" aria-label="缩放" min={0} max={100} defaultValue={56} />
          <button type="button" aria-label="放大"><svg width="10" height="10" viewBox="0 0 10 10" stroke="#444"><path d="M0 4.5h10M5 0v10" /></svg></button>
        </ZoomGroup>
        <ZoomText type="button">135%</ZoomText>
        <svg width="14" height="14" viewBox="0 0 14 14" fill="none" stroke="#555"><rect x=".5" y=".5" width="13" height="13" strokeDasharray="5 1" /><path d="M7 2v3M7 9v3M2 7h3M9 7h3M5.5 3.5 7 2l1.5 1.5M5.5 10.5 7 12l1.5-1.5M3.5 5.5 2 7l1.5 1.5M10.5 5.5 12 7l-1.5 1.5" /></svg>
      </StatusBar>

      <ImeBar>
        <ImeLogo width="36" height="36" viewBox="0 0 38 36">
          <path d="M4 5 29 0q3 0 4 3l4 24q0 3-3 4L9 36q-3 0-4-3L0 9q0-3 4-4z" fill="#f0561d" />
          <path d="M28 8c-8-3-18-1-17 4 1 5 17 3 17 9 0 6-12 7-19 4" fill="none" stroke="#fff" strokeWidth="5" />
        </ImeLogo>
        <ImeMode type="button">中</ImeMode>
        <svg width="20" height="22" viewBox="0 0 20 22"><circle cx="4.5" cy="8" r="2.5" fill="none" stroke="#1f77c9" strokeWidth="1.6" /><path d="M11 12a2.6 2.6 0 1 1 5 1c0 3-2 5-4 6l-.5-1c1.5-1 2-2 2-3-1.5 0-2.5-1-2.5-3z" fill="#1f77c9" /></svg>
        <svg width="22" height="22" viewBox="0 0 22 22" fill="none" stroke="#1f77c9" strokeWidth="2"><circle cx="11" cy="11" r="9" /><path d="M8 6.5v4M14 6.5v4M6 12.5c2 4.5 8 4.5 10 0" /></svg>
        <svg width="22" height="22" viewBox="0 0 22 22" fill="none" stroke="#1f77c9" strokeWidth="2"><rect x="8" y="2" width="6" height="11" rx="3" fill="#1f77c9" /><path d="M4 9c0 9 14 9 14 0M11 16v4M7 20h8" /></svg>
        <svg width="22" height="22" viewBox="0 0 22 22" fill="none" stroke="#1f77c9" strokeWidth="2"><rect x="2" y="4" width="18" height="14" rx="2" /><path d="M5 8h12M5 11h12" strokeDasharray="2 1.3" /><path d="M6 15h10" /></svg>
        <svg width="24" height="22" viewBox="0 0 24 22" fill="#b9bfd0"><circle cx="8" cy="6" r="4" /><path d="M1 19c0-6 3-8 7-8 2 0 3 1 4 2H9v6z" /><path d="M10 12.5h12M16 13v8M16 16.5h5M8 20.5h15" stroke="#b9bfd0" /></svg>
        <svg width="22" height="22" viewBox="0 0 22 22" fill="#1f77c9"><path d="M7 2c2 2 6 2 8 0l6 4-2 5-2-1v10H5V10l-2 1-2-5z" /></svg>
      </ImeBar>

      <Watermark>CSDN @程序猿毕业分享网</Watermark>
    </Shell>
  );
}
